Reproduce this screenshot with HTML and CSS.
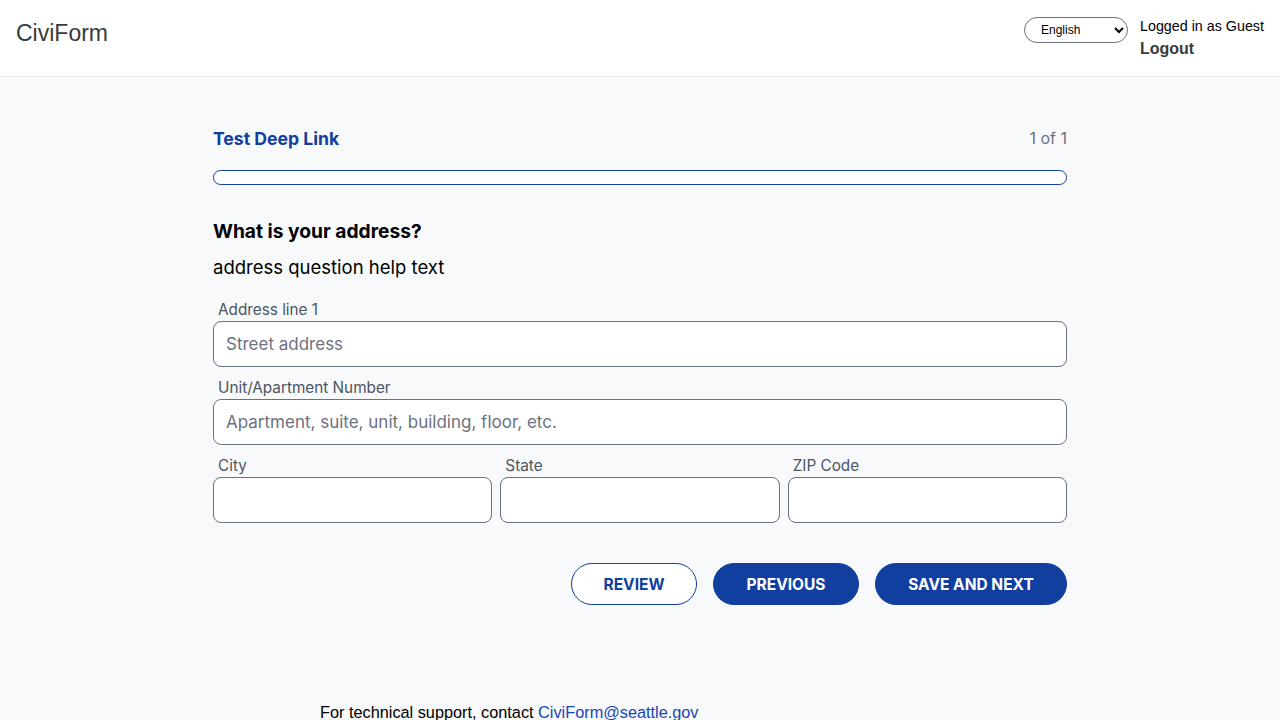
FILE: index.html
```html
<!DOCTYPE html>
<html lang="en">
<head>
<meta charset="utf-8">
<title>CiviForm</title>
<link rel="stylesheet" href="styles.css">
</head>
<body>
<header class="topbar">
  <div class="brand">CiviForm</div>
  <div class="account">
    <select class="lang"><option>English</option></select>
    <div class="user">
      <div class="user-name">Logged in as Guest</div>
      <a class="logout" href="#">Logout</a>
    </div>
  </div>
</header>
<main class="page">
  <section class="form-card">
    <div class="program-row">
      <h1 class="program-title">Test Deep Link</h1>
      <div class="step-count">1 of 1</div>
    </div>
    <div class="progress"><div class="progress-fill"></div></div>
    <h2 class="question">What is your address?</h2>
    <p class="help">address question help text</p>
    <div class="field">
      <label class="label">Address line 1</label>
      <input class="input" type="text" placeholder="Street address">
    </div>
    <div class="field">
      <label class="label">Unit/Apartment Number</label>
      <input class="input" type="text" placeholder="Apartment, suite, unit, building, floor, etc.">
    </div>
    <div class="field-row">
      <div class="field">
        <label class="label">City</label>
        <input class="input" type="text">
      </div>
      <div class="field">
        <label class="label">State</label>
        <input class="input" type="text">
      </div>
      <div class="field">
        <label class="label">ZIP Code</label>
        <input class="input" type="text">
      </div>
    </div>
    <div class="actions">
      <button class="btn btn-outline">Review</button>
      <button class="btn btn-solid btn-prev">Previous</button>
      <button class="btn btn-solid btn-next">Save and next</button>
    </div>
  </section>
  <footer class="support">For technical support, contact <a href="#" class="support-link">CiviForm@seattle.gov</a></footer>
</main>
</body>
</html>
```
FILE: styles.css
```css
* { box-sizing: border-box; }
html, body { margin: 0; padding: 0; }
body {
  font-family: Inter, "Liberation Sans", Arial, sans-serif;
  background: #f8f9fa;
  color: #000;
  height: 720px;
  overflow: hidden;
}
.topbar {
  height: 77px;
  background: #fff;
  border-bottom: 1px solid #e5e7eb;
  display: flex;
  justify-content: space-between;
  align-items: flex-start;
  padding: 0 16px;
}
.brand {
  font-family: "Liberation Sans", Arial, sans-serif;
  font-size: 23px;
  color: #3a3a3a;
  margin-top: 20px;
}
.account {
  display: flex;
  align-items: flex-start;
  gap: 12px;
  margin-top: 16px;
}
.lang {
  width: 104px;
  height: 26px;
  margin-top: 1px;
  border: 1px solid #6b7280;
  border-radius: 13px;
  background: #fff;
  font-family: "Liberation Sans", Arial, sans-serif;
  font-size: 12px;
  padding: 0 6px 0 12px;
  color: #000;
}
.user {
  font-family: "Liberation Sans", Arial, sans-serif;
  font-size: 14.3px;
  color: #000;
  display: flex;
  flex-direction: column;
}
.user-name { line-height: 20px; }
.logout {
  font-size: 16px;
  font-weight: bold;
  color: #3a3a3a;
  text-decoration: none;
  line-height: 24px;
  margin-top: 1px;
}
.page {
  display: flex;
  flex-direction: column;
  align-items: center;
}
.form-card {
  width: 854px;
  padding-top: 47px;
}
.program-row {
  display: flex;
  justify-content: space-between;
  align-items: center;
  height: 28px;
}
.program-title {
  margin: 0;
  font-size: 17.6px;
  font-weight: 700;
  color: #113f9f;
}
.step-count {
  font-size: 16px;
  color: #6b7280;
}
.progress {
  margin-top: 18px;
  height: 15px;
  border: 1px solid #113f9f;
  border-radius: 8px;
  background: #fff;
}
.progress-fill { height: 100%; width: 0; }
.question {
  margin: 32px 0 0;
  font-size: 19.2px;
  font-weight: 700;
  line-height: 28px;
}
.help {
  margin: 8px 0 0;
  font-size: 18.5px;
  line-height: 28px;
}
.field {
  display: flex;
  flex-direction: column;
}
.help + .field { margin-top: 18px; }
.label {
  font-size: 15.3px;
  color: #4b5563;
  line-height: 22px;
  padding-left: 5px;
  margin-bottom: 0;
}
.input {
  height: 46px;
  border: 1px solid #6b7280;
  border-radius: 8px;
  background: #fff;
  font-family: inherit;
  font-size: 17px;
  padding: 0 12px;
  color: #111;
  width: 100%;
}
.input::placeholder { color: #6b7280; }
.field + .field { margin-top: 10px; }
.field-row {
  display: grid;
  grid-template-columns: 1fr 1fr 1fr;
  gap: 8px;
  margin-top: 10px;
}
.field-row .field { margin-top: 0; }
.actions {
  display: flex;
  justify-content: flex-end;
  gap: 16px;
  margin-top: 40px;
}
.btn {
  height: 42px;
  border-radius: 21px;
  font-family: inherit;
  font-size: 15.5px;
  font-weight: 700;
  text-transform: uppercase;
  cursor: pointer;
}
.btn-outline {
  width: 126px;
  background: #fff;
  border: 1px solid #113f9f;
  color: #113f9f;
}
.btn-solid {
  background: #113f9f;
  border: 1px solid #113f9f;
  color: #fff;
}
.btn-prev { width: 146px; }
.btn-next { width: 192px; }
.support {
  width: 854px;
  margin-top: 98px;
  padding-left: 107px;
  font-family: "Liberation Sans", Arial, sans-serif;
  font-size: 16.3px;
  color: #000;
}
.support-link { color: #1a44b8; text-decoration: none; }
```
